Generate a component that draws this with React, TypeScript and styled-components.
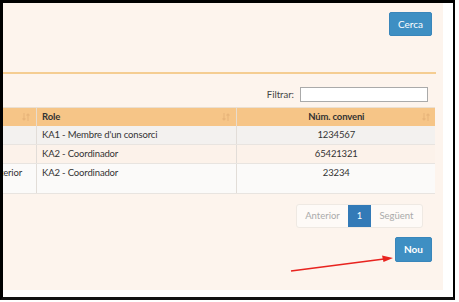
import styled, { createGlobalStyle } from 'styled-components'

const GlobalStyle = createGlobalStyle`
  html, body {
    margin: 0;
    padding: 0;
    background: #fff;
  }
  body {
    font-family: Lato, "Open Sans", sans-serif;
    width: 459px;
    height: 302px;
    overflow: hidden;
  }
`

const Frame = styled.div`
  position: relative;
  width: 450px;
  height: 294px;
  border-left: 3px solid #000;
  border-top: 3px solid #000;
  border-right: 2px solid #000;
  border-bottom: 3px solid #111;
  display: flex;
  background: #fff;
`

const Panel = styled.div`
  width: 440px;
  height: 287px;
  background: #fdf4ed;
  display: flex;
  flex-direction: column;
  overflow: hidden;
`

const TopBar = styled.div`
  display: flex;
  justify-content: flex-end;
  align-items: flex-start;
  padding: 9px 11px 0 0;
  height: 69px;
  box-sizing: border-box;
`

const Divider = styled.div`
  height: 1.5px;
  background: #f5cd92;
  margin-right: 7px;
`

const Button = styled.button<{ $bold?: boolean; $h: number }>`
  font-family: Lato, "Open Sans", sans-serif;
  font-size: 10px;
  font-weight: ${({ $bold }) => ($bold ? 700 : 400)};
  color: #fff;
  background: #3e8fc3;
  border: 1px solid #3986bb;
  border-radius: 2px;
  height: ${({ $h }) => $h}px;
  padding: 0 8px;
  cursor: pointer;
`

const FilterRow = styled.div`
  display: flex;
  justify-content: flex-end;
  align-items: center;
  gap: 6px;
  margin: 13px 15px 0 0;
  font-size: 9.5px;
  color: #444;
`

const FilterInput = styled.input`
  width: 128px;
  height: 15px;
  box-sizing: border-box;
  border: 1px solid #aaa;
  background: #fff;
  padding: 0;
`

const TableWrap = styled.div`
  margin: 5px 8px 0 0;
  overflow: hidden;
`

const Table = styled.table`
  border-collapse: collapse;
  margin-left: -60px;
  width: 492px;
  table-layout: fixed;
  font-size: 9.5px;
  letter-spacing: -0.15px;
  color: #333;
`

const Th = styled.th<{ $w: number; $center?: boolean }>`
  position: relative;
  width: ${({ $w }) => $w}px;
  height: 19px;
  box-sizing: border-box;
  background: #f6c587;
  text-align: ${({ $center }) => ($center ? 'center' : 'left')};
  padding: 0 5px;
  font-weight: 700;
  color: #333;
  border-left: 1px solid #e8dccd;
  border-top: 1px solid #eadfd2;
`

const SortIcon = styled.svg`
  position: absolute;
  right: 6px;
  top: 5px;
`

const Tr = styled.tr<{ $bg: string; $h: number }>`
  background: ${({ $bg }) => $bg};
  height: ${({ $h }) => $h}px;
`

const Td = styled.td<{ $center?: boolean }>`
  padding: 3px 5px 0;
  vertical-align: top;
  text-align: ${({ $center }) => ($center ? 'center' : 'left')};
  border-left: 1px solid #e2ddd8;
  border-bottom: 1px solid #e8e4e0;
  white-space: nowrap;
  overflow: hidden;
`

const FirstTd = styled(Td)`
  text-align: right;
  padding-right: 14px;
`

const Pager = styled.div`
  display: flex;
  align-self: flex-end;
  margin: 10px 20px 0 0;
  border: 1px solid #efe9e3;
  border-radius: 3px;
  background: #fefaf7;
  font-size: 9.5px;
  color: #aaa;
`

const PageItem = styled.div<{ $active?: boolean; $w: number }>`
  width: ${({ $w }) => $w}px;
  height: 22px;
  display: flex;
  align-items: center;
  justify-content: center;
  background: ${({ $active }) => ($active ? '#337ab7' : 'transparent')};
  color: ${({ $active }) => ($active ? '#fff' : '#aaa')};
`

const BottomBar = styled.div`
  display: flex;
  justify-content: flex-end;
  margin: 9px 11px 0 0;
`

const Arrow = styled.svg`
  position: absolute;
  left: -3px;
  top: -3px;
  pointer-events: none;
`

function Sort() {
  return (
    <SortIcon width="8" height="8" viewBox="0 0 8 8">
      <path d="M2 0v7M0.5 5.5L2 7l1.5-1.5M6 8V1M4.5 2.5L6 1l1.5 1.5" stroke="#e8b57a" strokeWidth="1.1" fill="none" />
    </SortIcon>
  )
}

const rows = [
  { bg: '#f3f1ef', h: 18, first: '', role: "KA1 - Membre d'un consorci", num: '1234567' },
  { bg: '#fcf2ea', h: 19, first: '', role: 'KA2 - Coordinador', num: '65421321' },
  { bg: '#fbfaf9', h: 30, first: 'anterior', role: 'KA2 - Coordinador', num: '23234' },
]

export default function App() {
  return (
    <>
      <GlobalStyle />
      <Frame>
        <Panel>
          <TopBar>
            <Button $h={24}>Cerca</Button>
          </TopBar>
          <Divider />
          <FilterRow>
            Filtrar:
            <FilterInput />
          </FilterRow>
          <TableWrap>
            <Table>
              <thead>
                <tr>
                  <Th $w={93}>
                    <Sort />
                  </Th>
                  <Th $w={200}>
                    Role
                    <Sort />
                  </Th>
                  <Th $w={199} $center>
                    Núm. conveni
                    <Sort />
                  </Th>
                </tr>
              </thead>
              <tbody>
                {rows.map((r, i) => (
                  <Tr key={i} $bg={r.bg} $h={r.h}>
                    <FirstTd>{r.first}</FirstTd>
                    <Td>{r.role}</Td>
                    <Td $center>{r.num}</Td>
                  </Tr>
                ))}
              </tbody>
            </Table>
          </TableWrap>
          <Pager>
            <PageItem $w={51}>Anterior</PageItem>
            <PageItem $w={23} $active>
              1
            </PageItem>
            <PageItem $w={51}>Següent</PageItem>
          </Pager>
          <BottomBar>
            <Button $bold $h={25}>Nou</Button>
          </BottomBar>
        </Panel>
        <Arrow width="459" height="302" viewBox="0 0 459 302">
          <line x1="291" y1="271" x2="384" y2="259" stroke="#e8231f" strokeWidth="1.6" />
          <path d="M393 258L382 255.5L383.5 262Z" fill="#e8231f" />
        </Arrow>
      </Frame>
    </>
  )
}
